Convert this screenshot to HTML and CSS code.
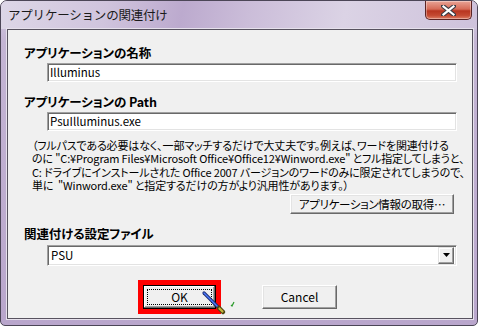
FILE: index.html
```html
<!DOCTYPE html>
<html lang="ja">
<head>
    <meta charset="UTF-8">
    <title>アプリケーションの関連付け</title>
    <link rel="stylesheet" href="styles.css">
</head>
<body>
    <div class="window">
        <div class="titlebar">
            <span class="title">アプリケーションの関連付け</span>
            <button class="close-btn">
                <svg width="15" height="11" viewBox="0 0 15 11">
                    <path d="M2 1 L13 10 M13 1 L2 10" stroke="#3b3b44" stroke-width="4.2" stroke-linecap="round"/>
                    <path d="M2.5 1.5 L12.5 9.5 M12.5 1.5 L2.5 9.5" stroke="#fff" stroke-width="2.2" stroke-linecap="square"/>
                </svg>
            </button>
        </div>

        <div class="client">
            <div class="label first">アプリケーションの名称</div>
            <div class="textbox">Illuminus</div>

            <div class="label">アプリケーションの Path</div>
            <div class="textbox">PsuIlluminus.exe</div>

            <div class="note">
                <span>（フルパスである必要はなく、一部マッチするだけで大丈夫です。例えば、ワードを関連付ける</span>
                <span>のに "C:¥Program Files¥Microsoft Office¥Office12¥Winword.exe" とフル指定してしまうと、</span>
                <span>C: ドライブにインストールされた Office 2007 バージョンのワードのみに限定されてしまうので、</span>
                <span>単に&nbsp; "Winword.exe" と指定するだけの方がより汎用性があります。）</span>
            </div>

            <div class="info-row">
                <button class="btn btn-info">アプリケーション情報の取得…</button>
            </div>

            <div class="label label-file">関連付ける設定ファイル</div>
            <div class="combo">
                <span class="combo-text">PSU</span>
                <span class="combo-arrow">
                    <svg width="7" height="4" viewBox="0 0 7 4"><path d="M0 0 H7 L3.5 4 Z" fill="#000"/></svg>
                </span>
            </div>

            <div class="button-row">
                <button class="btn btn-ok"><span class="focus">OK</span></button>
                <button class="btn btn-cancel">Cancel</button>
            </div>
        </div>

        <!-- pen cursor drawn over the OK button -->
        <svg class="pen" width="40" height="30" viewBox="0 0 40 30">
            <path d="M4 3 L20 19" stroke="#1c2a6e" stroke-width="3.2" stroke-linecap="round"/>
            <path d="M4 3 L20 19" stroke="#4d7dff" stroke-width="1.4" stroke-linecap="round"/>
            <path d="M19 18 L23 22" stroke="#4a4410" stroke-width="4.5" stroke-linecap="round"/>
            <path d="M19.5 18.5 L22.5 21.5" stroke="#c8b53a" stroke-width="2.2" stroke-linecap="round"/>
            <path d="M31 15 L32 16 L34 12" stroke="#2a9a2a" stroke-width="1.2" fill="none"/>
        </svg>
    </div>
</body>
</html>
```

FILE: styles.css
```css
* {
    margin: 0;
    padding: 0;
    box-sizing: border-box;
}
body {
    font-family: "Noto Sans CJK JP", "Liberation Sans", sans-serif;
    background-color: #fff;
    color: #000;
    overflow: hidden;
}
.window {
    position: relative;
    width: 478px;
    height: 326px;
    border: 1px solid #4c4657;
    border-radius: 7px 7px 5px 5px;
    padding: 0 4px 6px 6px;
    background: linear-gradient(180deg, #d6cde2 0, #c4b5d4 40px, #b9a6cc 100%);
}
.titlebar {
    height: 28px;
    margin: 0 -4px 0 -6px;
    padding-left: 7px;
    border-radius: 6px 6px 0 0;
    background: linear-gradient(100deg, #ddd7e7 0%, #d0c4dd 22%, #bcaace 38%, #cbbdd9 52%, #dbd3e5 72%, #cec2db 100%);
    display: flex;
    align-items: center;
}
.title {
    font-size: 12.5px;
    color: #1a1a1a;
    letter-spacing: -0.2px;
    margin-top: -1px;
}
.close-btn {
    position: absolute;
    top: 0;
    right: 5px;
    width: 47px;
    height: 19px;
    border: 1px solid #5b2424;
    border-top: none;
    border-radius: 0 0 5px 5px;
    background: linear-gradient(180deg, #e9a496 0%, #d66b57 45%, #b83520 55%, #c44a32 80%, #de7e66 100%);
    box-shadow: inset 0 0 0 1px rgba(255,255,255,0.35);
    display: flex;
    justify-content: center;
    align-items: center;
}
.client {
    width: 466px;
    height: 290px;
    border: 1px solid #57525f;
    box-shadow: 0 0 0 1px #e6e1ec;
    background-color: #f0f0f0;
    display: flex;
    flex-direction: column;
    align-items: flex-start;
}
.label {
    margin: 13px 0 0 16px;
    font-size: 12.5px;
    font-weight: 700;
    line-height: 14px;
    font-feature-settings: "palt";
    letter-spacing: -0.1px;
}
.label.first {
    margin-top: 16px;
}
.textbox {
    margin: 3px 0 0 39px;
    width: 410px;
    height: 19px;
    background: #fff;
    border-top: 1px solid #a0a0a0;
    border-left: 1px solid #a0a0a0;
    border-right: 1px solid #fff;
    border-bottom: 1px solid #fff;
    box-shadow: inset 1px 1px 0 #696969, inset -1px -1px 0 #e3e3e3;
    padding-left: 2px;
    font-size: 11.5px;
    line-height: 17px;
}
.note {
    margin: 8px 0 0 24px;
    font-size: 11px;
    white-space: nowrap;
    font-feature-settings: "palt";
    letter-spacing: -0.15px;
    display: flex;
    flex-direction: column;
}
.note span {
    display: block;
    height: 13.4px;
    line-height: 13.4px;
}
.info-row {
    align-self: stretch;
    display: flex;
    justify-content: flex-end;
    padding-right: 18px;
    margin-top: 1px;
}
.btn {
    font-family: "Noto Sans CJK JP", "Liberation Sans", sans-serif;
    font-size: 11.5px;
    color: #000;
    background-color: #f0f0f0;
    border: 1px solid;
    border-color: #fff #696969 #696969 #fff;
    box-shadow: inset -1px -1px 0 #a0a0a0, inset 1px 1px 0 #e3e3e3;
    display: flex;
    justify-content: center;
    align-items: center;
}
.btn-info {
    width: 164px;
    height: 20px;
    font-size: 11.5px;
    letter-spacing: -0.3px;
    font-feature-settings: "palt";
}
.label.label-file {
    margin-top: 13px;
}
.combo {
    margin: 4px 0 0 39px;
    width: 410px;
    height: 21px;
    background: #fff;
    border-top: 1px solid #a0a0a0;
    border-left: 1px solid #a0a0a0;
    border-right: 1px solid #fff;
    border-bottom: 1px solid #fff;
    box-shadow: inset 1px 1px 0 #696969, inset -1px -1px 0 #e3e3e3;
    display: flex;
    align-items: center;
    justify-content: space-between;
    padding: 1px 2px 1px 3px;
}
.combo-text {
    font-size: 11.5px;
    line-height: 17px;
}
.combo-arrow {
    width: 16px;
    height: 17px;
    background: #f0f0f0;
    border: 1px solid;
    border-color: #e3e3e3 #696969 #696969 #e3e3e3;
    box-shadow: inset -1px -1px 0 #a0a0a0, inset 1px 1px 0 #fff;
    display: flex;
    justify-content: center;
    align-items: center;
}
.button-row {
    display: flex;
    gap: 46px;
    margin: 19px 0 0 135px;
}
.btn-ok {
    width: 73px;
    height: 24px;
    border: 1px solid #000;
    box-shadow: inset -1px -1px 0 #696969, inset 1px 1px 0 #fff, inset -2px -2px 0 #a0a0a0;
    outline: 5px solid #ff0000;
    padding: 3px;
}
.focus {
    flex: 1;
    align-self: stretch;
    border: 1px dotted #000;
    display: flex;
    justify-content: center;
    align-items: center;
    font-size: 12px;
}
.btn-cancel {
    width: 75px;
    height: 24px;
    font-size: 12px;
}
.pen {
    position: absolute;
    left: 199px;
    top: 289px;
}
```
